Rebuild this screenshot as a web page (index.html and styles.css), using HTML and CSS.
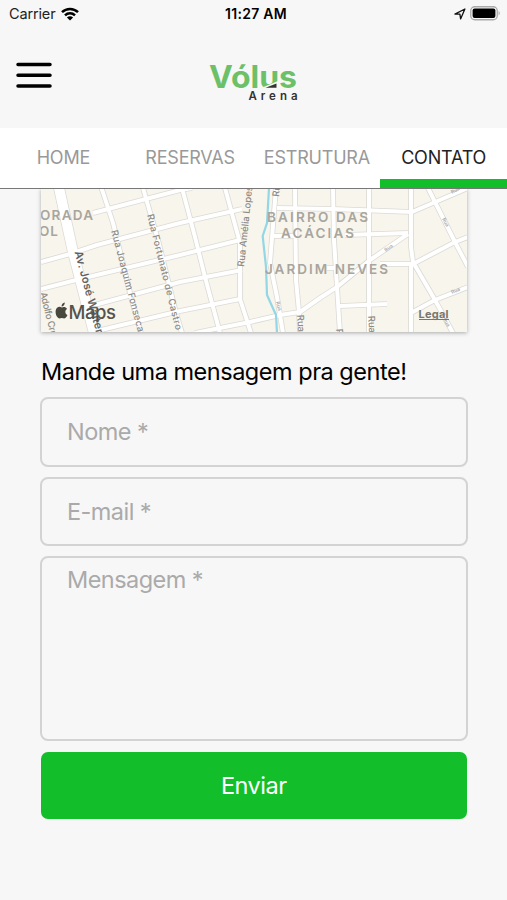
FILE: index.html
```html
<!DOCTYPE html>
<html lang="pt-BR">
<head>
<meta charset="utf-8">
<title>Vólus Arena</title>
<link rel="stylesheet" href="styles.css">
</head>
<body>
<div class="status">
  <div class="carrier"><span>Carrier</span>
    <svg width="18" height="14" viewBox="0 0 18 14"><g fill="none" stroke="#000" stroke-width="2.5"><path d="M1 5.2C5.500.9 12.500.9 17 5.200"/><path d="M4 8.400C6.800 5.600 11.200 5.600 14 8.400"/></g><path d="M5.900 10.500C7.700 8.900 10.300 8.900 12.100 10.500L9 13.600Z"/></svg>
  </div>
  <span class="clock">11:27 AM</span>
  <div class="indicators">
    <svg width="12" height="12" viewBox="0 0 12 12"><path d="M.9 6.100 10.900 1 6.600 10.900 5.900 6.100Z" fill="none" stroke="#111" stroke-width="1.300" stroke-linejoin="round"/></svg>
    <svg width="31" height="15" viewBox="0 0 31 15"><rect x=".75" y=".75" width="26.500" height="13" rx="4" fill="#f7f7f7" stroke="#aaa" stroke-width="1.300"/><rect x="2.600" y="2.500" width="22.800" height="9.500" rx="2"/><path d="M28.600 5Q31 7.200 28.600 9.500Z" fill="#aaa"/></svg>
  </div>
</div>
<header class="header">
  <svg class="menu" width="36" height="27" viewBox="0 0 36 27"><path d="M2 2.500H34M2 13.300H34M2 24H34" stroke="#000" stroke-width="3.500" stroke-linecap="round"/></svg>
  <svg class="logo" width="90" height="46" viewBox="0 0 90 46">
    <text class="brand" x="0" y="29.500" textLength="88" lengthAdjust="spacingAndGlyphs">Vólus</text>
    <path d="M51 30.500 69 23V31H51Z" fill="#f7f7f7"/><path d="M56.500 29.800 67.500 25.500V29.800Z" fill="#333"/>
    <text class="brand-sub" x="39.500" y="42" textLength="49">Arena</text>
  </svg>
</header>
<nav class="tabs">
  <div class="tab"><span class="t-home">HOME</span></div>
  <div class="tab"><span class="t-res">RESERVAS</span></div>
  <div class="tab"><span class="t-est">ESTRUTURA</span></div>
  <div class="tab active"><span class="t-con">CONTATO</span></div>
</nav>
<main class="content">
  <svg class="map" width="426" height="143" viewBox="41 189 426 143">
    <defs>
      <g id="roads" fill="none" stroke-linejoin="round">
        <path d="M101.500 188 113 223 131 297 141 333M143 188 158 240 176 313 182 333M182 188 195 237 205 277 220 333M225 188 240 243 240 299 251 333"/>
        <path d="M93 213 180 190 192 188M41 262 70 254 97 245 180 223 242 209M41 289 80 279 180 255 240 240M87 307 180 282 242 270M97 331 180 311 240 299M195 333 250 322 280 315 300 312 320 298 337 287 370 260 408 234"/>
        <path d="M276 188 270 263 277 297 283 333M295 188 296 280 299 312 300 333M333 188 334 240 337 287 340 333M369 188 369 333M411 188 411 247 413 262 435 300 453 333M411 262V333M428 188 455 242 468 267"/>
        <path d="M277 208 333 209 412 212 468 188M272 236 296 236M345 235 408 233M327 268H337M380 264 413 264 455 242 468 237M411 313 435 300 468 287M340 306 387 304"/>
      </g>
    </defs>
    <rect x="41" y="189" width="426" height="143" fill="#f8f5ec"/>
    <use href="#roads" stroke="#dbdad5" stroke-width="5.600"/>
    <path d="M59 188 73 252 94 333" fill="none" stroke="#dbdad5" stroke-width="11.500"/>
    <use href="#roads" stroke="#fff" stroke-width="4"/>
    <path d="M59 188 73 252 94 333" fill="none" stroke="#fff" stroke-width="10"/>
    <path d="M269 188 267 223 262.700 236 266 267 267 295 276 315 277 333" fill="none" stroke="#93d7e6" stroke-width="2.200"/>
    <g class="district">
      <text x="40" y="219.500" textLength="53">ORADA</text>
      <text x="39" y="235.500" textLength="19">OL</text>
      <text x="267" y="222" textLength="101">BAIRRO DAS</text>
      <text x="281" y="238" textLength="73">ACÁCIAS</text>
      <text x="265" y="274" textLength="123">JARDIM NEVES</text>
    </g>
    <g class="street">
      <text transform="translate(111 231) rotate(75)" textLength="105">Rua Joaquim Fonseca</text>
      <text transform="translate(147 215) rotate(76)" textLength="119">Rua Fortunato de Castro</text>
      <text transform="translate(244 267) rotate(-84)" textLength="81">Rua Amélia Lopes</text>
      <text transform="translate(279 197) rotate(-84)">Rua</text>
      <text transform="translate(40 293) rotate(76)" textLength="50">Adolfo Cruz</text>
      <text transform="translate(368 316) rotate(86)">Rua</text>
      <text transform="translate(297 315) rotate(86)">Rua</text>
      <text transform="translate(336 329) rotate(86)">R</text>
    </g>
    <text class="avenue" transform="translate(74.500 252) rotate(75)" textLength="85">Av. José Walter</text>
    <g class="tiny">
      <text transform="translate(386 252) rotate(-37)">Rua</text><text transform="translate(442 219) rotate(62)">Rua</text><text transform="translate(452 294) rotate(-23)">Rua</text><text transform="translate(452 194) rotate(-28)">Rua</text><text transform="translate(276 302) rotate(76)">Rua</text><text transform="translate(443 319) rotate(62)">Rua</text>
    </g>
    <path d="M61.800 307.500c-1.500-1-3.300-.9-4.700.3-2.600 2.300-1.600 8.200 1.200 10.300 1.200.9 2.200-.1 3.500-.1s2.300 1 3.500.1c1-.8 1.700-1.900 2.200-3.200-2.800-1.300-2.800-4.700-.4-6-1.300-2-3.500-2.400-5.300-1.400ZM61.500 306.600c0-2.300 1.300-3.800 3.300-4.100.1 2.200-1.300 4-3.300 4.100Z" fill="#49483f"/>
    <text class="maps" x="68.500" y="318.500" textLength="47.500">Maps</text>
    <text class="legal" x="418.500" y="317.500" textLength="30">Legal</text>
    <path d="M419 319.500H449" stroke="#77756f"/>
  </svg>
  <h1 class="title"><span>Mande uma mensagem pra gente!</span></h1>
  <form class="form">
    <label class="field"><span class="f-nome">Nome *</span></label>
    <label class="field"><span class="f-mail">E-mail *</span></label>
    <label class="field message"><span class="f-msg">Mensagem *</span></label>
    <button class="send" type="button">Enviar</button>
  </form>
</main>
</body>
</html>
```
FILE: styles.css
```css
* { box-sizing: border-box; }
body { margin: 0; height: 900px; overflow: hidden; background: #f7f7f7; color: #000; font-family: Inter, Roboto, "Liberation Sans", sans-serif; }
svg { display: block; }
.status { height: 27px; padding: 0 6px 0 9px; display: grid; grid-template-columns: 1fr auto 1fr; align-items: center; font-size: 14.5px; }
.carrier, .indicators { display: flex; align-items: center; gap: 6px; }
.carrier span { letter-spacing: -.15px; color: #222; }
.indicators { justify-content: flex-end; gap: 4px; }
.clock { font-weight: 600; font-size: 14px; letter-spacing: .3px; margin-right: -2px; }
.header { height: 101px; display: grid; grid-template-columns: 1fr auto 1fr; align-items: start; padding: 35px 16px 0; }
.logo { margin-top: -4px; }
.brand { font: 700 31px Inter, sans-serif; fill: #6cc067; }
.brand-sub { font: 600 11.500px Inter, sans-serif; fill: #333; }
.tabs { height: 61px; background: #fff; display: grid; grid-template-columns: repeat(4, 1fr); border-bottom: 1.500px solid #777; font-size: 18px; color: #999; }
.tab { display: flex; align-items: center; justify-content: center; padding-bottom: 1px; white-space: nowrap; }
.tab span { letter-spacing: -.2px; }
.tab.active { color: #222; border-bottom: 9px solid #12bf2a; padding: 8px 0 0; }
.content { padding: 0 39.500px 0 40px; }
.map { margin-left: 1px; box-shadow: 0 1px 4px #aaa; clip-path: inset(0 -6px -7px -6px); }
.district { font: 600 13.500px Inter, sans-serif; fill: #a8a59e; }
.street { font: 500 9.500px Inter, sans-serif; fill: #8d8b86; }
.avenue { font: 600 11px Inter, sans-serif; fill: #62615d; }
.tiny { font: 600 5px Inter, sans-serif; fill: #aaa; }
.maps { font: 500 18.500px Inter, sans-serif; fill: #55534d; }
.legal { font: 700 11px Inter, sans-serif; fill: #77756f; }
.title { margin: 23px 0 9px 1px; height: 33px; line-height: 33px; font-size: 23.500px; font-weight: 400; letter-spacing: -.48px; white-space: nowrap; }
.form { display: flex; flex-direction: column; gap: 10px; }
.field { height: 69.500px; border: 2px solid #d3d3d3; border-radius: 8px; padding: 0 25px; display: flex; align-items: center; font-size: 23.500px; color: #aaa; letter-spacing: -.55px; }
.message { height: 185px; align-items: flex-start; padding-top: 7px; }
.send { height: 67px; margin: 1px 1px 0; border: 0; border-radius: 7px; background: #12bf2a; color: #fff; font: 400 23.500px Inter, sans-serif; letter-spacing: -.5px; }
```
